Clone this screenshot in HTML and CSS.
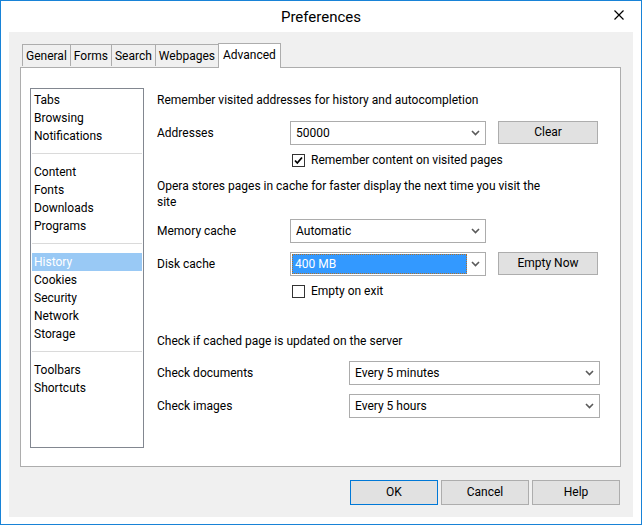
FILE: index.html
```html
<!DOCTYPE html>
<html>
<head>
<meta charset="utf-8">
<link rel="stylesheet" href="styles.css">
</head>
<body>
<div class="window">
  <div class="titlebar">
    <span class="title">Preferences</span>
    <span class="close"><svg width="10" height="10" viewBox="0 0 10 10"><path d="M0.5 0.5 L9.5 9.5 M9.5 0.5 L0.5 9.5" stroke="#000" stroke-width="1.2" fill="none"/></svg></span>
  </div>
  <div class="client">
    <div class="tabs">
      <div class="tab">General</div>
      <div class="tab">Forms</div>
      <div class="tab">Search</div>
      <div class="tab">Webpages</div>
      <div class="tab active">Advanced</div>
    </div>
    <div class="panel">
      <div class="nav">
        <div class="item">Tabs</div>
        <div class="item">Browsing</div>
        <div class="item">Notifications</div>
        <div class="sep"></div>
        <div class="item">Content</div>
        <div class="item">Fonts</div>
        <div class="item">Downloads</div>
        <div class="item">Programs</div>
        <div class="sep"></div>
        <div class="item selected">History</div>
        <div class="item">Cookies</div>
        <div class="item">Security</div>
        <div class="item">Network</div>
        <div class="item">Storage</div>
        <div class="sep"></div>
        <div class="item">Toolbars</div>
        <div class="item">Shortcuts</div>
      </div>
      <div class="content">
        <div class="heading h1">Remember visited addresses for history and autocompletion</div>
        <div class="row r-addr">
          <span class="label">Addresses</span>
          <div class="combo"><span class="val">50000</span><svg class="arrow" width="9" height="6" viewBox="0 0 9 6"><path d="M1 1 L4.5 4.5 L8 1" stroke="#5a5a5a" stroke-width="1.6" fill="none"/></svg></div>
          <div class="btn">Clear</div>
        </div>
        <div class="check c1"><span class="box checked"><svg width="11" height="11" viewBox="0 0 11 11"><path d="M2 5.5 L4.3 8 L9 2.5" stroke="#000" stroke-width="1.8" fill="none"/></svg></span>Remember content on visited pages</div>
        <div class="para">Opera stores pages in cache for faster display the next time you visit the site</div>
        <div class="row r-mem">
          <span class="label">Memory cache</span>
          <div class="combo"><span class="val">Automatic</span><svg class="arrow" width="9" height="6" viewBox="0 0 9 6"><path d="M1 1 L4.5 4.5 L8 1" stroke="#5a5a5a" stroke-width="1.6" fill="none"/></svg></div>
        </div>
        <div class="row r-disk">
          <span class="label">Disk cache</span>
          <div class="combo focus"><span class="val sel">400 MB</span><svg class="arrow" width="9" height="6" viewBox="0 0 9 6"><path d="M1 1 L4.5 4.5 L8 1" stroke="#5a5a5a" stroke-width="1.6" fill="none"/></svg></div>
          <div class="btn">Empty Now</div>
        </div>
        <div class="check c2"><span class="box"></span>Empty on exit</div>
        <div class="heading h2">Check if cached page is updated on the server</div>
        <div class="row r-doc">
          <span class="label wide">Check documents</span>
          <div class="combo long"><span class="val">Every 5 minutes</span><svg class="arrow" width="9" height="6" viewBox="0 0 9 6"><path d="M1 1 L4.5 4.5 L8 1" stroke="#5a5a5a" stroke-width="1.6" fill="none"/></svg></div>
        </div>
        <div class="row r-img">
          <span class="label wide">Check images</span>
          <div class="combo long"><span class="val">Every 5 hours</span><svg class="arrow" width="9" height="6" viewBox="0 0 9 6"><path d="M1 1 L4.5 4.5 L8 1" stroke="#5a5a5a" stroke-width="1.6" fill="none"/></svg></div>
        </div>
      </div>
    </div>
    <div class="buttons">
      <div class="btn dlg default">OK</div>
      <div class="btn dlg">Cancel</div>
      <div class="btn dlg">Help</div>
    </div>
  </div>
</div>
</body>
</html>
```
FILE: styles.css
```css
* { box-sizing: border-box; }
html, body { margin: 0; padding: 0; background: #fff; }
body {
  font-family: Roboto, "Noto Sans", sans-serif;
  font-size: 12px;
  color: #000;
}
.window {
  width: 642px;
  height: 525px;
  border: 1px solid #1883d7;
  background: #fff;
  padding: 0 8px 8px 8px;
  display: flex;
  flex-direction: column;
}
.titlebar {
  height: 31px;
  flex: none;
  display: flex;
  align-items: center;
  justify-content: center;
  position: relative;
}
.title {
  font-size: 15px;
  color: #000;
  margin-top: 1px;
}
.close {
  position: absolute;
  right: 9px;
  top: 9px;
  width: 10px;
  height: 10px;
  display: flex;
}
.client {
  flex: 1;
  background: #f0f0f0;
  padding: 11px 12px 12px 11px;
  display: flex;
  flex-direction: column;
}
.tabs {
  display: flex;
  padding-left: 2px;
  height: 24px;
  align-items: flex-end;
  position: relative;
  z-index: 1;
}
.tab {
  height: 22px;
  border: 1px solid #adadad;
  border-bottom: none;
  border-right: none;
  background: #f0f0f0;
  padding: 0 3px 0 3px;
  line-height: 22px;
  margin-bottom: 1px;
}
.tab.active {
  height: 25px;
  background: #fff;
  border-right: 1px solid #adadad;
  margin-bottom: -1px;
  padding: 0 4px;
  line-height: 22px;
  margin-left: 0;
}
.panel {
  height: 400px;
  background: #fff;
  border: 1px solid #adadad;
  display: flex;
  padding: 20px 0 0 9px;
}
.nav {
  width: 114px;
  height: 360px;
  border: 1px solid #828790;
  padding: 2px 1px;
  flex: none;
}
.item {
  height: 18px;
  line-height: 18px;
  padding-left: 2px;
}
.item.selected {
  background: #99c9f5;
  color: #fff;
}
.sep {
  height: 18px;
  position: relative;
}
.sep::after {
  content: "";
  position: absolute;
  left: 0;
  right: 0;
  top: 8px;
  height: 1px;
  background: #dadada;
}
.content {
  flex: 1;
  padding-left: 13px;
  display: flex;
  flex-direction: column;
}
.heading, .para, .check { line-height: 16px; }
.h1 { margin-top: 4px; }
.row {
  display: flex;
  align-items: center;
  height: 23px;
}
.label { width: 133px; flex: none; }
.label.wide { width: 192px; }
.combo {
  width: 196px;
  height: 24px;
  border: 1px solid #acacac;
  background: #fff;
  display: flex;
  align-items: center;
  padding: 1px 5px 1px 1px;
  flex: none;
}
.combo.long { width: 251px; }
.val {
  flex: 1;
  padding-left: 4px;
  height: 20px;
  line-height: 20px;
}
.val.sel {
  background: #3399ff;
  color: #fff;
  outline: 1px dotted #b0702a;
  outline-offset: -1px;
  margin-right: 4px;
  padding-left: 3px;
}
.arrow { flex: none; margin-left: auto; }
.btn {
  border: 1px solid #adadad;
  background: #e1e1e1;
  height: 23px;
  line-height: 21px;
  text-align: center;
  width: 100px;
  margin-left: 12px;
}
.r-addr { margin-top: 13px; }
.c1 { margin-top: 8px; }
.check {
  display: flex;
  align-items: center;
  padding-left: 135px;
}
.box {
  width: 13px;
  height: 13px;
  border: 1px solid #333;
  background: #fff;
  margin-right: 6px;
  display: flex;
  align-items: center;
  justify-content: center;
}
.para { margin-top: 10px; width: 390px; }
.r-mem { margin-top: 9px; }
.r-disk { margin-top: 10px; }
.c2 { margin-top: 8px; }
.h2 { margin-top: 34px; }
.r-doc { margin-top: 12px; }
.r-img { margin-top: 10px; }
.buttons {
  display: flex;
  justify-content: flex-end;
  margin-top: 13px;
  gap: 3px;
  padding-right: 1px;
}
.btn.dlg {
  width: 88px;
  height: 25px;
  margin: 0;
  line-height: 23px;
}
.btn.dlg.default { border-color: #0078d7; }
```
